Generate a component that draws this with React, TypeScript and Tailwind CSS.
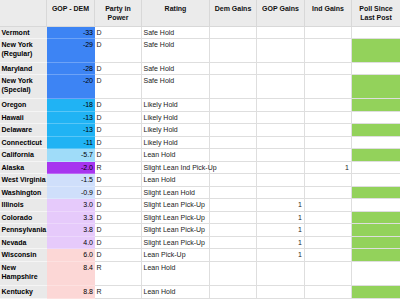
import React from "react";

type Row = {
  s: string[];
  v: string;
  c: string;
  p: string;
  r: string;
  gop?: string;
  ind?: string;
  poll: boolean;
  h: number;
};

const rows: Row[] = [
  { s: ["Vermont"], v: "-33", c: "bg-[#3d84f4]", p: "D", r: "Safe Hold", poll: false, h: 12 },
  { s: ["New York", "(Regular)"], v: "-29", c: "bg-[#3d84f4]", p: "D", r: "Safe Hold", poll: true, h: 24 },
  { s: ["Maryland"], v: "-28", c: "bg-[#3d84f4]", p: "D", r: "Safe Hold", poll: false, h: 12 },
  { s: ["New York", "(Special)"], v: "-20", c: "bg-[#3d84f4]", p: "D", r: "Safe Hold", poll: true, h: 24 },
  { s: ["Oregon"], v: "-18", c: "bg-[#20b3f4]", p: "D", r: "Likely Hold", poll: true, h: 13 },
  { s: ["Hawaii"], v: "-13", c: "bg-[#20b3f4]", p: "D", r: "Likely Hold", poll: false, h: 12 },
  { s: ["Delaware"], v: "-13", c: "bg-[#20b3f4]", p: "D", r: "Likely Hold", poll: true, h: 13 },
  { s: ["Connecticut"], v: "-11", c: "bg-[#20b3f4]", p: "D", r: "Likely Hold", poll: false, h: 12 },
  { s: ["California"], v: "-5.7", c: "bg-[#9fdcf9]", p: "D", r: "Lean Hold", poll: true, h: 13 },
  { s: ["Alaska"], v: "-2.0", c: "bg-[#a735ef]", p: "R", r: "Slight Lean Ind Pick-Up", ind: "1", poll: false, h: 12 },
  { s: ["West Virginia"], v: "-1.5", c: "bg-[#cfdffb]", p: "D", r: "Lean Hold", poll: false, h: 13 },
  { s: ["Washington"], v: "-0.9", c: "bg-[#cfdffb]", p: "D", r: "Slight Lean Hold", poll: true, h: 12 },
  { s: ["Illinois"], v: "3.0", c: "bg-[#e6cafb]", p: "D", r: "Slight Lean Pick-Up", gop: "1", poll: false, h: 13 },
  { s: ["Colorado"], v: "3.3", c: "bg-[#e6cafb]", p: "D", r: "Slight Lean Pick-Up", gop: "1", poll: true, h: 12 },
  { s: ["Pennsylvania"], v: "3.8", c: "bg-[#e6cafb]", p: "D", r: "Slight Lean Pick-Up", gop: "1", poll: true, h: 13 },
  { s: ["Nevada"], v: "4.0", c: "bg-[#e6cafb]", p: "D", r: "Slight Lean Pick-Up", gop: "1", poll: true, h: 12 },
  { s: ["Wisconsin"], v: "6.0", c: "bg-[#fcd7d6]", p: "D", r: "Lean Pick-Up", gop: "1", poll: true, h: 13 },
  { s: ["New", "Hampshire"], v: "8.4", c: "bg-[#fcd7d6]", p: "R", r: "Lean Hold", poll: false, h: 24 },
  { s: ["Kentucky"], v: "8.8", c: "bg-[#fcd7d6]", p: "R", r: "Lean Hold", poll: true, h: 13 },
];

const cols = "grid grid-cols-[47px_48px_47px_68px_47px_48px_47px_48px]";
const cell = "border-b border-r border-[#dedede] pt-[1px] leading-[9px]";

export default function App() {
  return (
    <div
      className="w-[400px] h-[300px] overflow-hidden bg-white text-[7px] text-[#222]"
      style={{ fontFamily: '"Liberation Sans", Arial, sans-serif' }}
    >
      <div className={`${cols} h-[27px] bg-[#ebebeb] font-bold text-[#111] text-center leading-[9px]`}>
        <div className="border-r border-b border-[#d8d8d8]" />
        <div className="border-r border-b border-[#d8d8d8] pt-[4px]">GOP - DEM</div>
        <div className="border-r border-b border-[#d8d8d8] pt-[4px]">
          Party in
          <br />
          Power
        </div>
        <div className="border-r border-b border-[#d8d8d8] pt-[4px]">Rating</div>
        <div className="border-r border-b border-[#d8d8d8] pt-[4px]">Dem Gains</div>
        <div className="border-r border-b border-[#d8d8d8] pt-[4px]">GOP Gains</div>
        <div className="border-r border-b border-[#d8d8d8] pt-[4px]">Ind Gains</div>
        <div className="border-b border-[#d8d8d8] pt-[4px]">
          Poll Since
          <br />
          Last Post
        </div>
      </div>
      {rows.map((row, i) => (
        <div key={i} className={cols} style={{ height: row.h }}>
          <div className="bg-[#e9e9e9] border-b border-[#f5f5f5] pt-[1px] pl-[1.5px] leading-[9px] font-bold text-black whitespace-nowrap">
            {row.s.map((l, j) => (
              <div key={j}>{l}</div>
            ))}
          </div>
          <div className={`${row.c} border-b border-white/25 pt-[1px] pr-[2px] leading-[9px] text-right text-black`}>
            {row.v}
          </div>
          <div className={`${cell} pl-[1.5px]`}>{row.p}</div>
          <div className={`${cell} pl-[1.5px] whitespace-nowrap relative z-10`}>{row.r}</div>
          <div className={cell} />
          <div className={`${cell} text-right pr-[2px]`}>{row.gop ?? ""}</div>
          <div className={`${cell} text-right pr-[2px]`}>{row.ind ?? ""}</div>
          <div className={`border-b border-[#dedede] ${row.poll ? "bg-[#93d25b]" : ""}`} />
        </div>
      ))}
    </div>
  );
}
